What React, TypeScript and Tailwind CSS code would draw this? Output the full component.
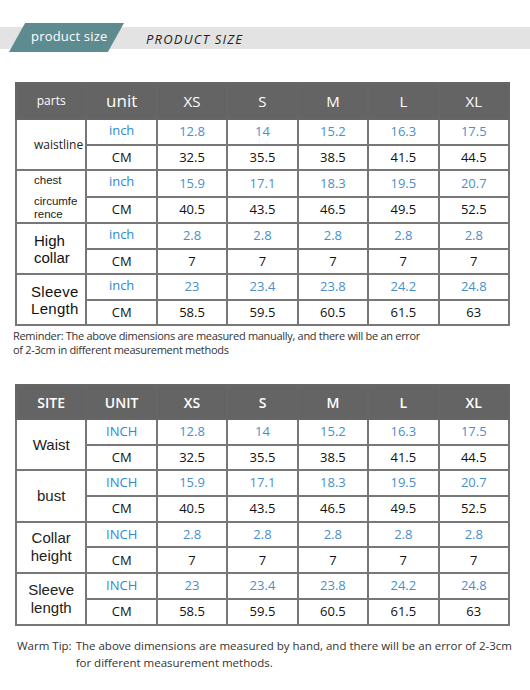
import React from 'react';

const sizes = ['XS', 'S', 'M', 'L', 'XL'];

const rows1 = [
  { inch: ['12.8', '14', '15.2', '16.3', '17.5'], cm: ['32.5', '35.5', '38.5', '41.5', '44.5'] },
  { inch: ['15.9', '17.1', '18.3', '19.5', '20.7'], cm: ['40.5', '43.5', '46.5', '49.5', '52.5'] },
  { inch: ['2.8', '2.8', '2.8', '2.8', '2.8'], cm: ['7', '7', '7', '7', '7'] },
  { inch: ['23', '23.4', '23.8', '24.2', '24.8'], cm: ['58.5', '59.5', '60.5', '61.5', '63'] },
];

const cell = 'border-2 border-[#777777] text-center p-0';
const tight = { fontFamily: '"Liberation Sans", Arial, sans-serif' };

function Labels1({ i }: { i: number }) {
  if (i === 0) return <div className="text-left pl-[17px] text-[12px] text-[#222]">waistline</div>;
  if (i === 1)
    return (
      <div className="text-left pl-[17px] text-[11.5px] leading-[13px] text-[#222] h-[51px] pt-[3px]" style={tight}>
        <div>chest</div>
        <div className="mt-[8px]">circumfe</div>
        <div>rence</div>
      </div>
    );
  if (i === 2)
    return (
      <div className="text-left pl-[17px] text-[15px] leading-[17px] text-[#111]" style={tight}>
        High<br />collar
      </div>
    );
  return (
    <div className="text-left pl-[14px] text-[15px] leading-[17px] font-medium text-[#111] tracking-[0.3px]" style={tight}>
      Sleeve<br />Length
    </div>
  );
}

const labels2 = [['Waist'], ['bust'], ['Collar', 'height'], ['Sleeve', 'length']];

export default function App() {
  return (
    <div className="w-[530px] h-[690px] bg-white relative overflow-hidden" style={{ fontFamily: '"Open Sans", "Noto Sans", sans-serif' }}>
      {/* banner */}
      <div className="pt-[23px]">
        <div className="relative h-[29px]">
          <div className="absolute left-0 right-0 top-[4px] h-[22px] bg-[#e3e3e3]" />
          <div className="absolute left-[9px] top-0 w-[115px] h-[29px] bg-[#5e8b8f]" style={{ clipPath: 'polygon(14% 0, 100% 0, 86% 100%, 0 100%)' }} />
          <div className="absolute left-[31px] top-[5px] text-[13px] leading-[17px] text-white tracking-[0.2px]">product size</div>
          <div className="absolute left-[146px] top-[8px] text-[13px] leading-[17px] italic text-[#222] tracking-[1.2px]">PRODUCT SIZE</div>
        </div>
      </div>

      {/* table 1 */}
      <table className="ml-[15px] mt-[30px] w-[495px] table-fixed border-collapse">
        <thead>
          <tr className="h-[36px] bg-[#646464] text-white">
            <th className="border-2 border-[#666] font-normal text-[12px]">parts</th>
            <th className="border-2 border-[#666] font-normal text-[17px]">unit</th>
            {sizes.map((s) => (
              <th key={s} className="border-2 border-[#666] font-normal text-[15px]">{s}</th>
            ))}
          </tr>
        </thead>
        <tbody>
          {rows1.map((r, i) => (
            <React.Fragment key={i}>
              <tr className="h-[25.5px]">
                <td rowSpan={2} className={cell}>
                  <Labels1 i={i} />
                </td>
                <td className={`${cell} text-[13px] text-[#2b8ad6]`}>
                  <div className="-mt-[3px]">inch</div>
                </td>
                {r.inch.map((v, j) => (
                  <td key={j} className={`${cell} text-[13px] text-[#4a8fcc]`}>{v}</td>
                ))}
              </tr>
              <tr className="h-[25.5px]">
                <td className={`${cell} text-[13px] text-[#111]`}>CM</td>
                {r.cm.map((v, j) => (
                  <td key={j} className={`${cell} text-[13px] text-[#111]`}>{v}</td>
                ))}
              </tr>
            </React.Fragment>
          ))}
        </tbody>
      </table>

      <div className="ml-[13px] mt-[3px] text-[11px] leading-[14px] tracking-[-0.3px] text-[#333]">
        Reminder: The above dimensions are measured manually, and there will be an error
        <br />
        of 2-3cm in different measurement methods
      </div>

      {/* table 2 */}
      <table className="ml-[15px] mt-[27px] w-[495px] table-fixed border-collapse">
        <thead>
          <tr className="h-[34px] bg-[#646464] text-white">
            <th className="border-2 border-[#666] font-semibold text-[14px]">SITE</th>
            <th className="border-2 border-[#666] font-semibold text-[14px]">UNIT</th>
            {sizes.map((s) => (
              <th key={s} className="border-2 border-[#666] font-semibold text-[14px]">{s}</th>
            ))}
          </tr>
        </thead>
        <tbody>
          {rows1.map((r, i) => (
            <React.Fragment key={i}>
              <tr className="h-[25.7px]">
                <td rowSpan={2} className={`${cell} text-[15px] leading-[18px] text-[#222]`} style={tight}>
                  {labels2[i].map((l) => (
                    <div key={l}>{l}</div>
                  ))}
                </td>
                <td className={`${cell} text-[13px] text-[#2b8ad6]`}>INCH</td>
                {r.inch.map((v, j) => (
                  <td key={j} className={`${cell} text-[13px] text-[#4a8fcc]`}>{v}</td>
                ))}
              </tr>
              <tr className="h-[25.7px]">
                <td className={`${cell} text-[13px] text-[#111]`}>CM</td>
                {r.cm.map((v, j) => (
                  <td key={j} className={`${cell} text-[13px] text-[#111]`}>{v}</td>
                ))}
              </tr>
            </React.Fragment>
          ))}
        </tbody>
      </table>

      <div className="ml-[17px] mt-[11px] flex text-[11.5px] leading-[17px] text-[#333]">
        <span className="whitespace-nowrap mr-[4px]">Warm Tip:</span>
        <span className="w-[442px]">
          The above dimensions are measured by hand, and there will be an error of{' '}
          <span className="whitespace-nowrap">2-3cm</span> for different measurement methods.
        </span>
      </div>
    </div>
  );
}
